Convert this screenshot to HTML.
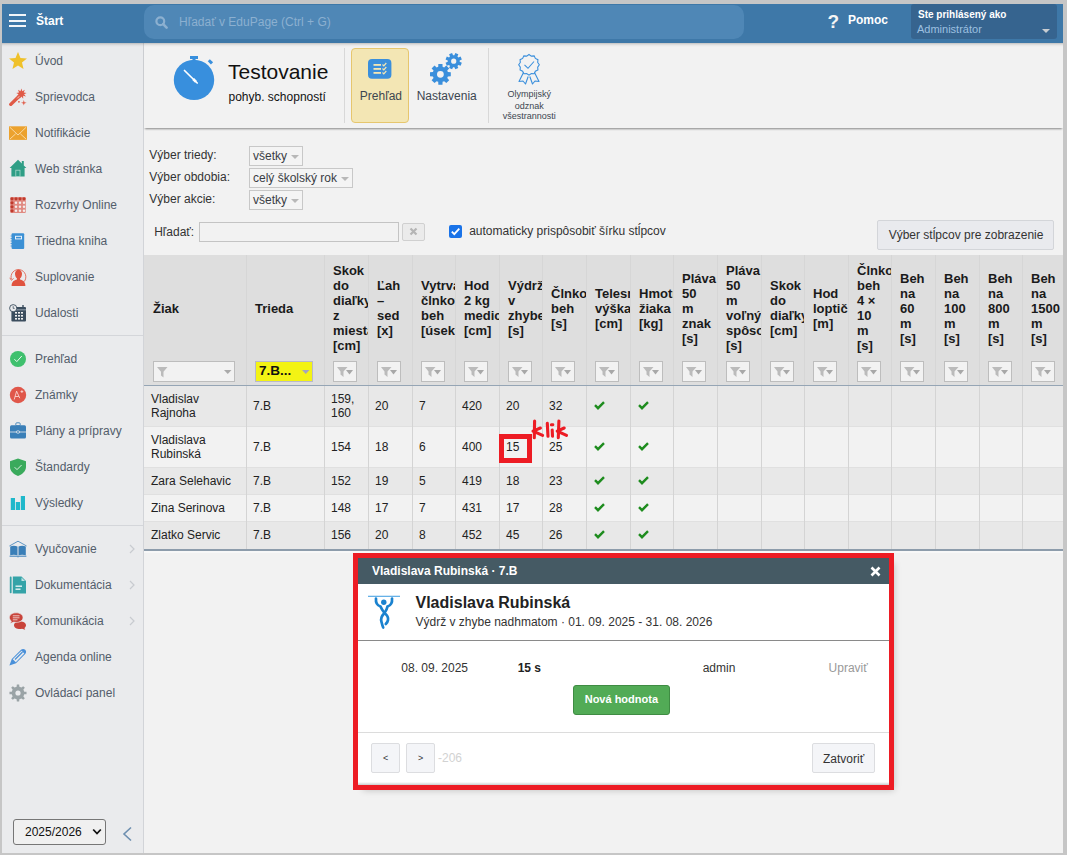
<!DOCTYPE html>
<html><head><meta charset="utf-8">
<style>
*{box-sizing:border-box;}
html,body{margin:0;padding:0;}
body{width:1067px;height:855px;overflow:hidden;position:relative;background:#f2f2f2;font-family:"Liberation Sans",sans-serif;color:#222;font-size:12px;}
.a{position:absolute;}
.t{position:absolute;white-space:nowrap;line-height:1;}
/* gray frame */
.frame{position:absolute;background:#c6c6c6;z-index:100;}
/* header */
#hdr{left:0;top:0;width:1067px;height:43px;background:#3e78a8;}
.hb{position:absolute;left:9px;width:17px;height:2px;background:#f2f5f8;}
#search{left:144px;top:5px;width:600px;height:34px;background:#4f87b6;border-radius:10px;}
#sidebg{left:0;top:43px;width:144px;height:812px;background:#eaebed;border-right:1px solid #d2d4d8;}
#side{left:0;top:0;width:0;height:0;}
.si{position:absolute;white-space:nowrap;left:35px;font-size:12px;color:#535d6b;line-height:1;}
.ic{position:absolute;left:9px;width:18px;height:18px;}
.sep{position:absolute;left:0;width:143px;height:1px;background:#d4d6da;}
.chev{position:absolute;left:130px;color:#c5c8cc;font-size:12px;}
.sel{position:absolute;height:20px;border:1px solid #c8c8c8;background:#f4f4f4;}
.sel span{position:absolute;left:3px;top:2.6px;font-size:12px;line-height:1;color:#3a3d44;white-space:nowrap;}
.sel i{position:absolute;right:3px;top:8px;width:0;height:0;border-left:4px solid transparent;border-right:4px solid transparent;border-top:4px solid #b8b8b8;}
.hl{position:absolute;overflow:hidden;height:120px;}
.hl div{position:absolute;left:9px;top:0;font-size:13px;line-height:15px;font-weight:bold;color:#1a1a1a;white-space:nowrap;}
.flt{position:absolute;top:361px;height:21px;border:1px solid #bdbdbd;background:#f2f2f2;}
.bt{position:absolute;font-size:12px;line-height:1;color:#222;white-space:nowrap;}
.btn{position:absolute;top:743px;height:30px;background:#f4f5f8;border:1px solid #dcdde0;border-radius:2px;}
.btn span{position:absolute;top:9px;font-size:11px;line-height:1;color:#333;white-space:nowrap;}
</style></head><body>

<!-- header -->
<div id="hdr" class="a">
  <div class="hb" style="top:14px"></div>
  <div class="hb" style="top:19.5px"></div>
  <div class="hb" style="top:25px"></div>
  <div class="t" style="left:36px;top:14.5px;font-size:12px;color:#fff;font-weight:bold;">Štart</div>
</div>
<div id="search" class="a">
  <svg class="a" style="left:11px;top:11px" width="13" height="13" viewBox="0 0 13 13"><circle cx="5.3" cy="5.3" r="3.9" fill="none" stroke="#8cb0d0" stroke-width="2.2"/><line x1="8.2" y1="8.2" x2="11.6" y2="11.6" stroke="#8cb0d0" stroke-width="2.6" stroke-linecap="round"/></svg>
  <div class="t" style="left:35px;top:11px;font-size:12px;color:#8cb0d0;">Hľadať v EduPage (Ctrl + G)</div>
</div>
<div class="t" style="left:827.5px;top:12px;font-size:19px;font-weight:bold;color:#f4f4f4;">?</div>
<div class="t" style="left:848px;top:14px;font-size:12px;font-weight:bold;color:#fff;">Pomoc</div>
<div class="a" style="left:911px;top:4px;width:146px;height:35px;background:#36648f;border-radius:3px;">
  <div class="t" style="left:7px;top:6px;font-size:10px;font-weight:bold;color:#fff;">Ste prihlásený ako</div>
  <div class="t" style="left:6px;top:20px;font-size:11px;color:#9dc0e0;">Administrátor</div>
  <svg class="a" style="left:130.5px;top:24.5px" width="8" height="4"><path d="M0 0H8L4 4Z" fill="#c8cdd2"/></svg>
</div>

<!-- sidebar -->
<div id="sidebg" class="a"></div>
<div id="side" class="a">
<div class="si" style="top:54.64px">Úvod</div>
<div class="si" style="top:90.64px">Sprievodca</div>
<div class="si" style="top:126.64px">Notifikácie</div>
<div class="si" style="top:162.64px">Web stránka</div>
<div class="si" style="top:198.64px">Rozvrhy Online</div>
<div class="si" style="top:234.64px">Triedna kniha</div>
<div class="si" style="top:270.64px">Suplovanie</div>
<div class="si" style="top:306.64px">Udalosti</div>
<div class="sep" style="top:335px"></div>
<div class="si" style="top:353px">Prehľad</div>
<div class="si" style="top:389px">Známky</div>
<div class="si" style="top:425px">Plány a prípravy</div>
<div class="si" style="top:461px">Štandardy</div>
<div class="si" style="top:497px">Výsledky</div>
<div class="sep" style="top:525px"></div>
<div class="si" style="top:543px">Vyučovanie</div>
<div class="si" style="top:579px">Dokumentácia</div>
<div class="si" style="top:615px">Komunikácia</div>
<div class="si" style="top:651px">Agenda online</div>
<div class="si" style="top:687px">Ovládací panel</div>
<svg class="a" style="left:128px;top:544px" width="8" height="10"><path d="M2 1L6 5L2 9" fill="none" stroke="#c8cbd0" stroke-width="1.2"/></svg>
<svg class="a" style="left:128px;top:580px" width="8" height="10"><path d="M2 1L6 5L2 9" fill="none" stroke="#c8cbd0" stroke-width="1.2"/></svg>
<svg class="a" style="left:128px;top:616px" width="8" height="10"><path d="M2 1L6 5L2 9" fill="none" stroke="#c8cbd0" stroke-width="1.2"/></svg>

<!-- icons -->
<svg class="ic" style="top:51.5px" viewBox="0 0 18 18"><polygon points="9.00,-0.10 11.47,5.90 17.94,6.40 12.99,10.60 14.53,16.90 9.00,13.50 3.47,16.90 5.01,10.60 0.06,6.40 6.53,5.90" fill="#efc12b"/></svg>
<svg class="ic" style="top:87.5px" viewBox="0 0 18 18" style="overflow:visible"><line x1="1.8" y1="16.4" x2="11.2" y2="7.2" stroke="#e05a47" stroke-width="3.4" stroke-linecap="round"/><line x1="8.2" y1="10.4" x2="11.4" y2="7.2" stroke="#f7d3cd" stroke-width="0.9"/><polygon points="12.40,0.50 13.32,3.26 15.81,1.74 14.74,4.45 17.62,4.88 15.06,6.27 16.99,8.45 14.14,7.87 14.21,10.78 12.40,8.50 10.59,10.78 10.66,7.87 7.81,8.45 9.74,6.27 7.18,4.88 10.06,4.45 8.99,1.74 11.48,3.26" fill="#e05a47"/><polygon points="14.80,12.00 15.44,14.16 17.60,14.80 15.44,15.44 14.80,17.60 14.16,15.44 12.00,14.80 14.16,14.16" fill="#e05a47"/><rect x="9" y="13.2" width="1.8" height="1.3" fill="#e05a47"/></svg>
<svg class="ic" style="top:123.8px" viewBox="0 0 18 18"><rect x="0" y="2.3" width="18" height="13.6" fill="#eca22e"/><path d="M0.8 3.2L9 11L17.2 3.2M0.8 15.2L6.7 9.8M17.2 15.2L11.3 9.8" fill="none" stroke="#fbe6c0" stroke-width="0.8"/></svg>
<svg class="ic" style="top:159.4px" viewBox="0 0 18 18"><path d="M0.6 9L9 0.8L12.8 4.5V2H14.8V6.4L17.4 9H15.6V17.6H2.4V9Z" fill="#2f9e86"/><rect x="6.8" y="11.2" width="4.2" height="6.4" fill="none" stroke="#a9d8cc" stroke-width="0.8"/></svg>
<svg class="ic" style="top:196px" viewBox="0 0 18 18"><rect x="1.2" y="1" width="15.6" height="16" rx="1" fill="#e08a82"/><g fill="#c0392b"><circle cx="3" cy="2.8" r="1.6"/><circle cx="7" cy="2.8" r="1.6"/><circle cx="11" cy="2.8" r="1.6"/><circle cx="15" cy="2.8" r="1.6"/><circle cx="3" cy="6.8" r="1.6"/><circle cx="3" cy="10.8" r="1.6"/><circle cx="3" cy="14.8" r="1.6"/></g><g fill="#f4eeed"><circle cx="7" cy="6.8" r="1.2"/><circle cx="11" cy="6.8" r="1.2"/><circle cx="15" cy="6.8" r="1.2"/><circle cx="7" cy="10.8" r="1.2"/><circle cx="11" cy="10.8" r="1.2"/><circle cx="15" cy="10.8" r="1.2"/><circle cx="7" cy="14.8" r="1.2"/><circle cx="11" cy="14.8" r="1.2"/><circle cx="15" cy="14.8" r="1.2"/></g></svg>
<svg class="ic" style="top:231.6px" viewBox="0 0 18 18"><rect x="2.6" y="1.3" width="12.6" height="15.6" rx="1" fill="#3b90d5"/><rect x="6" y="3.8" width="7" height="3.6" fill="#e8f1fa"/><rect x="7" y="4.8" width="5" height="1.6" fill="#3b90d5"/><g stroke="#3b90d5" stroke-width="0.8"><line x1="1.6" y1="4" x2="3" y2="4"/><line x1="1.6" y1="6.5" x2="3" y2="6.5"/><line x1="1.6" y1="9" x2="3" y2="9"/><line x1="1.6" y1="11.5" x2="3" y2="11.5"/><line x1="1.6" y1="14" x2="3" y2="14"/></g></svg>
<svg class="ic" style="top:268px" viewBox="0 0 18 18"><path d="M2.4 11.2A7.4 7.4 0 1 1 15.2 13.6" fill="none" stroke="#e0533f" stroke-width="0.8"/><path d="M0.8 9.8L2.4 12.3L4.6 10.4" fill="none" stroke="#e0533f" stroke-width="0.8"/><path d="M9.5 1.8C11.6 1.8 13 3.5 13 5.8C13 8 12 9.8 11 10.6V11.5C13.8 12.2 16.4 13.5 16.4 18H2.6C2.6 13.5 5.2 12.2 8 11.5V10.6C7 9.8 6 8 6 5.8C6 3.5 7.4 1.8 9.5 1.8Z" fill="#e0533f"/></svg>
<svg class="ic" style="top:303.5px" viewBox="0 0 18 18"><rect x="2.4" y="3" width="14.6" height="14.4" rx="1" fill="#3b4d5e"/><rect x="5.5" y="5.2" width="11.5" height="1.2" fill="#8795a2"/><g fill="#f0f0f0"><rect x="6" y="8" width="2" height="1.6"/><rect x="9" y="8" width="2" height="1.6"/><rect x="12" y="8" width="2" height="1.6"/><rect x="6" y="11" width="2" height="1.6"/><rect x="9" y="11" width="2" height="1.6"/><rect x="12" y="11" width="2" height="1.6"/><rect x="6" y="14" width="2" height="1.6"/><rect x="9" y="14" width="2" height="1.6"/><rect x="12" y="14" width="2" height="1.6"/></g><rect x="13.3" y="1" width="1.4" height="3.2" fill="#3b4d5e"/><circle cx="4.2" cy="4.2" r="3.6" fill="#eaebed" stroke="#3b4d5e" stroke-width="0.9"/><path d="M4.2 2.2V4.4H5.6" fill="none" stroke="#3b4d5e" stroke-width="0.8"/></svg>
<svg class="ic" style="top:350px" viewBox="0 0 18 18"><circle cx="9" cy="9" r="8" fill="#3fc06e"/><path d="M5.4 9.2L7.8 11.6L12.8 6" fill="none" stroke="#fff" stroke-width="0.9"/></svg>
<svg class="ic" style="top:385.8px" viewBox="0 0 18 18"><circle cx="9" cy="9" r="8.2" fill="#e0574a"/><path d="M5.2 13.5L7.6 5.2L10.8 12.2M6.1 10.5H9.8M11.5 5.6H14.3M12.9 4.2V7" fill="none" stroke="#fbe3df" stroke-width="0.8"/></svg>
<svg class="ic" style="top:421.8px" viewBox="0 0 18 18"><rect x="6.8" y="0.8" width="4.4" height="3" rx="1" fill="none" stroke="#3a7fb8" stroke-width="0.9"/><rect x="1" y="3.2" width="16" height="13.2" rx="1.5" fill="#3a7fb8"/><line x1="1" y1="10" x2="17" y2="10" stroke="#eaebed" stroke-width="0.8"/><ellipse cx="9" cy="10" rx="1.8" ry="1.2" fill="#3a7fb8" stroke="#eaebed" stroke-width="0.8"/></svg>
<svg class="ic" style="top:457.8px" viewBox="0 0 18 18"><path d="M9 0.6L17 3.2V9C17 13 13.5 16.2 9 18C4.5 16.2 1 13 1 9V3.2Z" fill="#3aaa5c"/><path d="M5.6 9.2L8 11.6L12.6 7" fill="none" stroke="#eaf5ee" stroke-width="0.9"/></svg>
<svg class="ic" style="top:494px" viewBox="0 0 18 18"><rect x="1.8" y="4" width="4.2" height="12" fill="#1fb8cb"/><rect x="6.8" y="8" width="4.2" height="8" fill="#1fb8cb"/><rect x="11.8" y="2" width="4.2" height="14" fill="#1fb8cb"/></svg>
<svg class="ic" style="top:539.7px" viewBox="0 0 18 18"><path d="M0.4 6L9 1.2L17.6 6" fill="none" stroke="#3a7fb8" stroke-width="0.8"/><path d="M1.2 6.4C3.5 5.6 6.5 5.6 8.5 6.6V15.3C6.5 14.5 3.5 14.5 1.2 15.2Z" fill="#3a7fb8"/><path d="M16.8 6.4C14.5 5.6 11.5 5.6 9.5 6.6V15.3C11.5 14.5 14.5 14.5 16.8 15.2Z" fill="#3a7fb8"/><path d="M0.6 16.2H17.4" stroke="#3a7fb8" stroke-width="1"/><path d="M8 16.8L9 17.6L10 16.8" fill="#3a7fb8"/></svg>
<svg class="ic" style="top:575.7px" viewBox="0 0 18 18"><rect x="0.8" y="0.6" width="1.8" height="16.6" rx="0.8" fill="#35a3a8"/><path d="M3.8 0.5H12.5L17 5V17.4H3.8Z" fill="#35a3a8"/><path d="M12.5 1.5V5H16" fill="#bfe3e4"/><rect x="6.5" y="9.5" width="6.5" height="1.4" fill="#e5f4f4"/><rect x="6.5" y="12.5" width="5" height="1.4" fill="#e5f4f4"/></svg>
<svg class="ic" style="top:611.7px" viewBox="0 0 18 18"><path d="M11 9.5C14.5 9.5 17 11 17 13.3C17 14.5 16.4 15.4 15.4 16L16.2 17.8L13 16.8C12.4 17 11.7 17 11 17C7.5 17 5 15.6 5 13.3C5 11 7.5 9.5 11 9.5Z" fill="#c8433a"/><path d="M7.2 0.8C11 0.8 14 2.8 14 5.6C14 8.4 11 10.4 7.2 10.4C6.3 10.4 5.5 10.3 4.8 10.1L1.2 11.6L2.3 9C1 8.1 0.4 6.9 0.4 5.6C0.4 2.8 3.4 0.8 7.2 0.8Z" fill="#c8433a" stroke="#eaebed" stroke-width="0.7"/><g stroke="#f2d4d1" stroke-width="0.9"><line x1="3.8" y1="3.8" x2="10.5" y2="3.8"/><line x1="3.8" y1="5.8" x2="10.5" y2="5.8"/><line x1="3.8" y1="7.8" x2="8.5" y2="7.8"/></g></svg>
<svg class="ic" style="top:647.8px" viewBox="0 0 18 18"><path d="M0.4 17.6L2.8 11L12 1.8C13.2 0.6 15 0.6 16.2 1.8C17.4 3 17.4 4.8 16.2 6L7 15.2Z" fill="#4a90d9"/><path d="M3.8 11.2L12.5 2.7L15.3 5.5L6.8 14.2Z" fill="#eaebed"/><line x1="6" y1="11.5" x2="13.5" y2="4" stroke="#4a90d9" stroke-width="1.3"/></svg>
<svg class="ic" style="top:683.9px" viewBox="0 0 18 18"><path d="M15.25,7.63 L17.52,7.82 L17.52,10.18 L15.25,10.37 L14.39,12.45 L15.86,14.19 L14.19,15.86 L12.45,14.39 L10.37,15.25 L10.18,17.52 L7.82,17.52 L7.63,15.25 L5.55,14.39 L3.81,15.86 L2.14,14.19 L3.61,12.45 L2.75,10.37 L0.48,10.18 L0.48,7.82 L2.75,7.63 L3.61,5.55 L2.14,3.81 L3.81,2.14 L5.55,3.61 L7.63,2.75 L7.82,0.48 L10.18,0.48 L10.37,2.75 L12.45,3.61 L14.19,2.14 L15.86,3.81 L14.39,5.55Z" fill="#9aa3a6"/><circle cx="9" cy="9" r="2.6" fill="#eaebed"/></svg>

<!-- year select -->
<div class="a" style="left:13px;top:819px;width:93px;height:26px;border:1px solid #767676;border-radius:3px;background:#f0f0f0;"></div>
<div class="t" style="left:25px;top:825.8px;font-size:12px;color:#111;">2025/2026</div>
<svg class="a" style="left:92px;top:828px" width="10" height="8"><path d="M1.2 1.5L5 5.5L8.8 1.5" fill="none" stroke="#111" stroke-width="1.8"/></svg>
<svg class="a" style="left:121px;top:826px" width="12" height="16"><path d="M10 1.5L3 8L10 14.5" fill="none" stroke="#6d8fb0" stroke-width="1.6"/></svg>
</div>


<!-- page header -->
<div class="a" style="left:144px;top:43px;width:919px;height:85px;background:#f2f2f2;box-shadow:0 2px 2px -1px rgba(0,0,0,0.45);"></div>
<svg class="a" style="left:170px;top:52px" width="48" height="52" viewBox="0 0 48 52">
  <circle cx="24" cy="27.9" r="20.2" fill="#388fdd"/>
  <rect x="20" y="4" width="8" height="3" fill="#388fdd"/>
  <rect x="22.5" y="6" width="3" height="3" fill="#388fdd"/>
  <line x1="38.8" y1="8.2" x2="42" y2="11.4" stroke="#388fdd" stroke-width="3"/>
  <line x1="14.5" y1="18.5" x2="27.2" y2="31" stroke="#fff" stroke-width="1.7" stroke-linecap="round"/>
  <line x1="23.2" y1="27" x2="26" y2="29.8" stroke="#fff" stroke-width="2.6"/>
</svg>
<div class="t" style="left:228px;top:61px;font-size:21px;color:#111;">Testovanie</div>
<div class="t" style="left:228.5px;top:91px;font-size:12px;color:#111;">pohyb. schopností</div>
<div class="a" style="left:344px;top:48px;width:1px;height:75px;background:#d8d8d8;"></div>
<div class="a" style="left:351px;top:48px;width:58px;height:75px;background:#f3e6b4;border:1px solid #e6c66e;border-radius:4px;"></div>
<svg class="a" style="left:368px;top:59px" width="24" height="20" viewBox="0 0 24 20">
  <rect x="0" y="0" width="23.4" height="19.8" rx="4" fill="#3a8fdc"/>
  <g fill="#f3e6b4"><rect x="5.5" y="5" width="7.5" height="1.8"/><rect x="5.5" y="9" width="7.5" height="1.8"/><rect x="5.5" y="13" width="7.5" height="1.8"/></g>
  <path d="M14.5 5.5L15.8 6.8L18.3 4M14.5 9.5L15.8 10.8L18.3 8M14.5 13.5L15.8 14.8L18.3 12" fill="none" stroke="#f3e6b4" stroke-width="1.2"/>
</svg>
<div class="t" style="left:359.8px;top:90.2px;font-size:12px;color:#3c4650;">Prehľad</div>
<svg class="a" style="left:426px;top:52px" width="40" height="36" viewBox="0 0 40 36"><path fill-rule="evenodd" fill="#3a8fdc" d="M21.89 20.12 L24.80 20.23 L24.80 24.37 L21.89 24.48 L21.24 26.06 L23.21 28.19 L20.29 31.11 L18.16 29.14 L16.58 29.79 L16.47 32.70 L12.33 32.70 L12.22 29.79 L10.64 29.14 L8.51 31.11 L5.59 28.19 L7.56 26.06 L6.91 24.48 L4.00 24.37 L4.00 20.23 L6.91 20.12 L7.56 18.54 L5.59 16.41 L8.51 13.49 L10.64 15.46 L12.22 14.81 L12.33 11.90 L16.47 11.90 L16.58 14.81 L18.16 15.46 L20.29 13.49 L23.21 16.41 L21.24 18.54Z M14.399999999999977 18.9A3.4 3.4 0 1 0 14.399999999999977 25.699999999999996A3.4 3.4 0 1 0 14.399999999999977 18.9Z"/><path fill-rule="evenodd" fill="#3a8fdc" d="M33.66 9.86 L35.84 10.82 L34.60 13.81 L32.38 12.95 L31.45 13.88 L32.31 16.10 L29.32 17.34 L28.36 15.16 L27.04 15.16 L26.08 17.34 L23.09 16.10 L23.95 13.88 L23.02 12.95 L20.80 13.81 L19.56 10.82 L21.74 9.86 L21.74 8.54 L19.56 7.58 L20.80 4.59 L23.02 5.45 L23.95 4.52 L23.09 2.30 L26.08 1.06 L27.04 3.24 L28.36 3.24 L29.32 1.06 L32.31 2.30 L31.45 4.52 L32.38 5.45 L34.60 4.59 L35.84 7.58 L33.66 8.54Z M27.69999999999999 6.600000000000003A2.6 2.6 0 1 0 27.69999999999999 11.800000000000002A2.6 2.6 0 1 0 27.69999999999999 6.600000000000003Z"/></svg>
<div class="t" style="left:416.7px;top:90.2px;font-size:12px;color:#3c4650;">Nastavenia</div>
<div class="a" style="left:488px;top:48px;width:1px;height:75px;background:#d8d8d8;"></div>
<svg class="a" style="left:516px;top:52px" width="26" height="34" viewBox="0 0 26 34">
  <path d="M13.00 2.50 L15.33 4.11 L18.15 3.88 L19.36 6.44 L21.92 7.65 L21.69 10.47 L23.30 12.80 L21.69 15.13 L21.92 17.95 L19.36 19.16 L18.15 21.72 L15.33 21.49 L13.00 23.10 L10.67 21.49 L7.85 21.72 L6.64 19.16 L4.08 17.95 L4.31 15.13 L2.70 12.80 L4.31 10.47 L4.08 7.65 L6.64 6.44 L7.85 3.88 L10.67 4.11 L13.00 2.50Z" fill="none" stroke="#3a8fdc" stroke-width="1.1"/>
  <path d="M8.5 12.8L12 16.3L18 9.5" fill="none" stroke="#3a8fdc" stroke-width="1.1"/>
  <path d="M7.5 20.5L3 29.5L7 29L9.5 32L12.2 24.5M18.5 20.5L23 29.5L19 29L16.5 32L13.8 24.5" fill="none" stroke="#3a8fdc" stroke-width="1.1" stroke-linejoin="round"/>
</svg>
<div class="t" style="left:507.6px;top:89.7px;font-size:9px;color:#3c4650;">Olympijský</div>
<div class="t" style="left:514.7px;top:101.5px;font-size:9px;color:#3c4650;">odznak</div>
<div class="t" style="left:502.8px;top:112.2px;font-size:9px;color:#3c4650;">všestrannosti</div>

<!-- filters -->
<div class="t" style="left:149.3px;top:148.7px;font-size:12px;color:#333;">Výber triedy:</div>
<div class="t" style="left:149.3px;top:171px;font-size:12px;color:#333;">Výber obdobia:</div>
<div class="t" style="left:149.3px;top:193px;font-size:12px;color:#333;">Výber akcie:</div>
<div class="sel" style="left:249px;top:146px;width:54px;"><span>všetky</span><i></i></div>
<div class="sel" style="left:249px;top:168px;width:104px;"><span>celý školský rok</span><i></i></div>
<div class="sel" style="left:249px;top:190px;width:54px;"><span>všetky</span><i></i></div>

<div class="t" style="left:154.2px;top:225.6px;font-size:12px;color:#333;">Hľadať:</div>
<div class="a" style="left:199px;top:222px;width:200px;height:20px;border:1px solid #c4c4c4;background:#f2f2f2;"></div>
<div class="a" style="left:402px;top:223px;width:23px;height:18px;border:1px solid #d0d0d0;background:#ebebeb;border-radius:2px;"></div>
<svg class="a" style="left:409px;top:227px" width="9" height="9"><path d="M1.5 1.5L7.5 7.5M7.5 1.5L1.5 7.5" stroke="#b5b5b5" stroke-width="2.2"/></svg>
<div class="a" style="left:449px;top:225px;width:13px;height:13px;background:#1a73e8;border-radius:2px;"></div>
<svg class="a" style="left:449px;top:225px" width="13" height="13"><path d="M2.8 6.6L5.3 9.2L10.3 3.6" fill="none" stroke="#fff" stroke-width="1.8"/></svg>
<div class="t" style="left:469.2px;top:225px;font-size:12px;color:#333;">automaticky prispôsobiť šírku stĺpcov</div>
<div class="a" style="left:877px;top:220px;width:177px;height:30px;background:#e9eaee;border:1px solid #d3d5d9;border-radius:2px;"></div>
<div class="t" style="left:888.7px;top:229px;font-size:12px;color:#333;">Výber stĺpcov pre zobrazenie</div>

<!-- table -->
<div id="tbl">
<div class="a" style="left:144px;top:255px;width:919px;height:130px;background:#dedede;"></div>
<div class="a" style="left:144px;top:386px;width:919px;height:41px;background:#e8e8e8;"></div>
<div class="a" style="left:144px;top:427px;width:919px;height:41px;background:#f2f2f2;"></div>
<div class="a" style="left:144px;top:426px;width:919px;height:1px;background:#e0e0e0;"></div>
<div class="a" style="left:144px;top:468px;width:919px;height:27px;background:#e8e8e8;"></div>
<div class="a" style="left:144px;top:467px;width:919px;height:1px;background:#e0e0e0;"></div>
<div class="a" style="left:144px;top:495px;width:919px;height:27px;background:#f2f2f2;"></div>
<div class="a" style="left:144px;top:494px;width:919px;height:1px;background:#e0e0e0;"></div>
<div class="a" style="left:144px;top:522px;width:919px;height:27px;background:#e8e8e8;"></div>
<div class="a" style="left:144px;top:521px;width:919px;height:1px;background:#e0e0e0;"></div>
<div class="a" style="left:144px;top:385px;width:919px;height:1px;background:#95a5b5;"></div>
<div class="a" style="left:144px;top:549px;width:919px;height:2px;background:#8d9cab;"></div>
<div class="a" style="left:144px;top:551px;width:919px;height:2px;background:#f8f8f8;"></div>
<div class="a" style="left:246px;top:255px;width:1px;height:130px;background:#d6d6d6;"></div>
<div class="a" style="left:246px;top:386px;width:1px;height:163px;background:#d4d4d4;"></div>
<div class="a" style="left:324px;top:255px;width:1px;height:130px;background:#d6d6d6;"></div>
<div class="a" style="left:324px;top:386px;width:1px;height:163px;background:#d4d4d4;"></div>
<div class="a" style="left:368px;top:255px;width:1px;height:130px;background:#d6d6d6;"></div>
<div class="a" style="left:368px;top:386px;width:1px;height:163px;background:#d4d4d4;"></div>
<div class="a" style="left:412px;top:255px;width:1px;height:130px;background:#d6d6d6;"></div>
<div class="a" style="left:412px;top:386px;width:1px;height:163px;background:#d4d4d4;"></div>
<div class="a" style="left:455px;top:255px;width:1px;height:130px;background:#d6d6d6;"></div>
<div class="a" style="left:455px;top:386px;width:1px;height:163px;background:#d4d4d4;"></div>
<div class="a" style="left:499px;top:255px;width:1px;height:130px;background:#d6d6d6;"></div>
<div class="a" style="left:499px;top:386px;width:1px;height:163px;background:#d4d4d4;"></div>
<div class="a" style="left:542px;top:255px;width:1px;height:130px;background:#d6d6d6;"></div>
<div class="a" style="left:542px;top:386px;width:1px;height:163px;background:#d4d4d4;"></div>
<div class="a" style="left:586px;top:255px;width:1px;height:130px;background:#d6d6d6;"></div>
<div class="a" style="left:586px;top:386px;width:1px;height:163px;background:#d4d4d4;"></div>
<div class="a" style="left:630px;top:255px;width:1px;height:130px;background:#d6d6d6;"></div>
<div class="a" style="left:630px;top:386px;width:1px;height:163px;background:#d4d4d4;"></div>
<div class="a" style="left:673px;top:255px;width:1px;height:130px;background:#d6d6d6;"></div>
<div class="a" style="left:673px;top:386px;width:1px;height:163px;background:#d4d4d4;"></div>
<div class="a" style="left:717px;top:255px;width:1px;height:130px;background:#d6d6d6;"></div>
<div class="a" style="left:717px;top:386px;width:1px;height:163px;background:#d4d4d4;"></div>
<div class="a" style="left:761px;top:255px;width:1px;height:130px;background:#d6d6d6;"></div>
<div class="a" style="left:761px;top:386px;width:1px;height:163px;background:#d4d4d4;"></div>
<div class="a" style="left:804px;top:255px;width:1px;height:130px;background:#d6d6d6;"></div>
<div class="a" style="left:804px;top:386px;width:1px;height:163px;background:#d4d4d4;"></div>
<div class="a" style="left:848px;top:255px;width:1px;height:130px;background:#d6d6d6;"></div>
<div class="a" style="left:848px;top:386px;width:1px;height:163px;background:#d4d4d4;"></div>
<div class="a" style="left:891px;top:255px;width:1px;height:130px;background:#d6d6d6;"></div>
<div class="a" style="left:891px;top:386px;width:1px;height:163px;background:#d4d4d4;"></div>
<div class="a" style="left:935px;top:255px;width:1px;height:130px;background:#d6d6d6;"></div>
<div class="a" style="left:935px;top:386px;width:1px;height:163px;background:#d4d4d4;"></div>
<div class="a" style="left:979px;top:255px;width:1px;height:130px;background:#d6d6d6;"></div>
<div class="a" style="left:979px;top:386px;width:1px;height:163px;background:#d4d4d4;"></div>
<div class="a" style="left:1022px;top:255px;width:1px;height:130px;background:#d6d6d6;"></div>
<div class="a" style="left:1022px;top:386px;width:1px;height:163px;background:#d4d4d4;"></div>
<div class="hl" style="left:144px;top:300.60px;width:102px;"><div>Žiak</div></div>
<div class="hl" style="left:246px;top:300.60px;width:78px;"><div>Trieda</div></div>
<div class="hl" style="left:324px;top:263.10px;width:44px;"><div>Skok<br>do<br>diaľky<br>z<br>miesta<br>[cm]</div></div>
<div class="hl" style="left:368px;top:278.10px;width:44px;"><div>Ľah<br>–<br>sed<br>[x]</div></div>
<div class="hl" style="left:412px;top:278.10px;width:43px;"><div>Vytrvalostný<br>člnkový<br>beh<br>[úseky]</div></div>
<div class="hl" style="left:455px;top:278.10px;width:44px;"><div>Hod<br>2 kg<br>medicinbal<br>[cm]</div></div>
<div class="hl" style="left:499px;top:278.10px;width:43px;"><div>Výdrž<br>v<br>zhybe<br>[s]</div></div>
<div class="hl" style="left:542px;top:285.60px;width:44px;"><div>Člnkový<br>beh<br>[s]</div></div>
<div class="hl" style="left:586px;top:285.60px;width:44px;"><div>Telesná<br>výška<br>[cm]</div></div>
<div class="hl" style="left:630px;top:285.60px;width:43px;"><div>Hmotnosť<br>žiaka<br>[kg]</div></div>
<div class="hl" style="left:673px;top:270.60px;width:44px;"><div>Pláva<br>50<br>m<br>znak<br>[s]</div></div>
<div class="hl" style="left:717px;top:263.10px;width:44px;"><div>Pláva<br>50<br>m<br>voľný<br>spôsob<br>[s]</div></div>
<div class="hl" style="left:761px;top:278.10px;width:43px;"><div>Skok<br>do<br>diaľky<br>[cm]</div></div>
<div class="hl" style="left:804px;top:285.60px;width:44px;"><div>Hod<br>loptičkou<br>[m]</div></div>
<div class="hl" style="left:848px;top:263.10px;width:43px;"><div>Člnkový<br>beh<br>4 ×<br>10<br>m<br>[s]</div></div>
<div class="hl" style="left:891px;top:270.60px;width:44px;"><div>Beh<br>na<br>60<br>m<br>[s]</div></div>
<div class="hl" style="left:935px;top:270.60px;width:44px;"><div>Beh<br>na<br>100<br>m<br>[s]</div></div>
<div class="hl" style="left:979px;top:270.60px;width:43px;"><div>Beh<br>na<br>800<br>m<br>[s]</div></div>
<div class="hl" style="left:1022px;top:270.60px;width:44px;"><div>Beh<br>na<br>1500<br>m<br>[s]</div></div>
<div class="flt" style="left:153px;width:82px;"><svg class="a" style="left:3px;top:5px" width="11" height="11"><path d="M0 0H10.5L6.5 4.7V10.5L4 8.5V4.7Z" fill="#bbb"/></svg><svg class="a" style="left:70px;top:8px" width="8" height="5"><path d="M0 0H7.5L3.75 4Z" fill="#aaa"/></svg></div>
<div class="flt" style="left:255px;width:58px;background:#f3f314;border-color:#b9b9c9;"><span style="position:absolute;left:3px;top:2px;font-size:13.5px;line-height:1;font-weight:bold;color:#111;">7.B...</span><svg class="a" style="left:46px;top:8px" width="8" height="5"><path d="M0 0H7.5L3.75 4Z" fill="#a5a5bd"/></svg></div>
<div class="flt" style="left:333px;width:24px;"><svg class="a" style="left:3px;top:5px" width="18" height="11"><path d="M0 0H10.5L6.5 4.5V10L3.5 7.5V4.5Z" fill="#bbb"/><path d="M9 3H16L12.5 7.5Z" fill="#a8a8a8"/></svg></div>
<div class="flt" style="left:377px;width:24px;"><svg class="a" style="left:3px;top:5px" width="18" height="11"><path d="M0 0H10.5L6.5 4.5V10L3.5 7.5V4.5Z" fill="#bbb"/><path d="M9 3H16L12.5 7.5Z" fill="#a8a8a8"/></svg></div>
<div class="flt" style="left:421px;width:24px;"><svg class="a" style="left:3px;top:5px" width="18" height="11"><path d="M0 0H10.5L6.5 4.5V10L3.5 7.5V4.5Z" fill="#bbb"/><path d="M9 3H16L12.5 7.5Z" fill="#a8a8a8"/></svg></div>
<div class="flt" style="left:464px;width:24px;"><svg class="a" style="left:3px;top:5px" width="18" height="11"><path d="M0 0H10.5L6.5 4.5V10L3.5 7.5V4.5Z" fill="#bbb"/><path d="M9 3H16L12.5 7.5Z" fill="#a8a8a8"/></svg></div>
<div class="flt" style="left:508px;width:24px;"><svg class="a" style="left:3px;top:5px" width="18" height="11"><path d="M0 0H10.5L6.5 4.5V10L3.5 7.5V4.5Z" fill="#bbb"/><path d="M9 3H16L12.5 7.5Z" fill="#a8a8a8"/></svg></div>
<div class="flt" style="left:551px;width:24px;"><svg class="a" style="left:3px;top:5px" width="18" height="11"><path d="M0 0H10.5L6.5 4.5V10L3.5 7.5V4.5Z" fill="#bbb"/><path d="M9 3H16L12.5 7.5Z" fill="#a8a8a8"/></svg></div>
<div class="flt" style="left:595px;width:24px;"><svg class="a" style="left:3px;top:5px" width="18" height="11"><path d="M0 0H10.5L6.5 4.5V10L3.5 7.5V4.5Z" fill="#bbb"/><path d="M9 3H16L12.5 7.5Z" fill="#a8a8a8"/></svg></div>
<div class="flt" style="left:639px;width:24px;"><svg class="a" style="left:3px;top:5px" width="18" height="11"><path d="M0 0H10.5L6.5 4.5V10L3.5 7.5V4.5Z" fill="#bbb"/><path d="M9 3H16L12.5 7.5Z" fill="#a8a8a8"/></svg></div>
<div class="flt" style="left:682px;width:24px;"><svg class="a" style="left:3px;top:5px" width="18" height="11"><path d="M0 0H10.5L6.5 4.5V10L3.5 7.5V4.5Z" fill="#bbb"/><path d="M9 3H16L12.5 7.5Z" fill="#a8a8a8"/></svg></div>
<div class="flt" style="left:726px;width:24px;"><svg class="a" style="left:3px;top:5px" width="18" height="11"><path d="M0 0H10.5L6.5 4.5V10L3.5 7.5V4.5Z" fill="#bbb"/><path d="M9 3H16L12.5 7.5Z" fill="#a8a8a8"/></svg></div>
<div class="flt" style="left:770px;width:24px;"><svg class="a" style="left:3px;top:5px" width="18" height="11"><path d="M0 0H10.5L6.5 4.5V10L3.5 7.5V4.5Z" fill="#bbb"/><path d="M9 3H16L12.5 7.5Z" fill="#a8a8a8"/></svg></div>
<div class="flt" style="left:813px;width:24px;"><svg class="a" style="left:3px;top:5px" width="18" height="11"><path d="M0 0H10.5L6.5 4.5V10L3.5 7.5V4.5Z" fill="#bbb"/><path d="M9 3H16L12.5 7.5Z" fill="#a8a8a8"/></svg></div>
<div class="flt" style="left:857px;width:24px;"><svg class="a" style="left:3px;top:5px" width="18" height="11"><path d="M0 0H10.5L6.5 4.5V10L3.5 7.5V4.5Z" fill="#bbb"/><path d="M9 3H16L12.5 7.5Z" fill="#a8a8a8"/></svg></div>
<div class="flt" style="left:900px;width:24px;"><svg class="a" style="left:3px;top:5px" width="18" height="11"><path d="M0 0H10.5L6.5 4.5V10L3.5 7.5V4.5Z" fill="#bbb"/><path d="M9 3H16L12.5 7.5Z" fill="#a8a8a8"/></svg></div>
<div class="flt" style="left:944px;width:24px;"><svg class="a" style="left:3px;top:5px" width="18" height="11"><path d="M0 0H10.5L6.5 4.5V10L3.5 7.5V4.5Z" fill="#bbb"/><path d="M9 3H16L12.5 7.5Z" fill="#a8a8a8"/></svg></div>
<div class="flt" style="left:988px;width:24px;"><svg class="a" style="left:3px;top:5px" width="18" height="11"><path d="M0 0H10.5L6.5 4.5V10L3.5 7.5V4.5Z" fill="#bbb"/><path d="M9 3H16L12.5 7.5Z" fill="#a8a8a8"/></svg></div>
<div class="flt" style="left:1031px;width:24px;"><svg class="a" style="left:3px;top:5px" width="18" height="11"><path d="M0 0H10.5L6.5 4.5V10L3.5 7.5V4.5Z" fill="#bbb"/><path d="M9 3H16L12.5 7.5Z" fill="#a8a8a8"/></svg></div>
<div class="bt" style="left:151px;top:392.74px;">Vladislav</div>
<div class="bt" style="left:151px;top:406.54px;">Rajnoha</div>
<div class="bt" style="left:253px;top:399.64px;">7.B</div>
<div class="bt" style="left:331px;top:392.74px;">159,</div>
<div class="bt" style="left:331px;top:406.54px;">160</div>
<div class="bt" style="left:375px;top:399.64px;">20</div>
<div class="bt" style="left:419px;top:399.64px;">7</div>
<div class="bt" style="left:462px;top:399.64px;">420</div>
<div class="bt" style="left:506px;top:399.64px;">20</div>
<div class="bt" style="left:549px;top:399.64px;">32</div>
<svg class="a" style="left:593.5px;top:401.1px" width="11" height="9"><path d="M1 4.2L4 7.2L10 1.2" fill="none" stroke="#1e8c1e" stroke-width="2.4"/></svg>
<svg class="a" style="left:637.5px;top:401.1px" width="11" height="9"><path d="M1 4.2L4 7.2L10 1.2" fill="none" stroke="#1e8c1e" stroke-width="2.4"/></svg>
<div class="bt" style="left:151px;top:433.74px;">Vladislava</div>
<div class="bt" style="left:151px;top:447.54px;">Rubinská</div>
<div class="bt" style="left:253px;top:440.64px;">7.B</div>
<div class="bt" style="left:331px;top:440.64px;">154</div>
<div class="bt" style="left:375px;top:440.64px;">18</div>
<div class="bt" style="left:419px;top:440.64px;">6</div>
<div class="bt" style="left:462px;top:440.64px;">400</div>
<div class="bt" style="left:506px;top:440.64px;">15</div>
<div class="bt" style="left:549px;top:440.64px;">25</div>
<svg class="a" style="left:593.5px;top:442.1px" width="11" height="9"><path d="M1 4.2L4 7.2L10 1.2" fill="none" stroke="#1e8c1e" stroke-width="2.4"/></svg>
<svg class="a" style="left:637.5px;top:442.1px" width="11" height="9"><path d="M1 4.2L4 7.2L10 1.2" fill="none" stroke="#1e8c1e" stroke-width="2.4"/></svg>
<div class="bt" style="left:151px;top:474.84px;">Zara Selehavic</div>
<div class="bt" style="left:253px;top:474.84px;">7.B</div>
<div class="bt" style="left:331px;top:474.84px;">152</div>
<div class="bt" style="left:375px;top:474.84px;">19</div>
<div class="bt" style="left:419px;top:474.84px;">5</div>
<div class="bt" style="left:462px;top:474.84px;">419</div>
<div class="bt" style="left:506px;top:474.84px;">18</div>
<div class="bt" style="left:549px;top:474.84px;">23</div>
<svg class="a" style="left:593.5px;top:476.3px" width="11" height="9"><path d="M1 4.2L4 7.2L10 1.2" fill="none" stroke="#1e8c1e" stroke-width="2.4"/></svg>
<svg class="a" style="left:637.5px;top:476.3px" width="11" height="9"><path d="M1 4.2L4 7.2L10 1.2" fill="none" stroke="#1e8c1e" stroke-width="2.4"/></svg>
<div class="bt" style="left:151px;top:501.84px;">Zina Serinova</div>
<div class="bt" style="left:253px;top:501.84px;">7.B</div>
<div class="bt" style="left:331px;top:501.84px;">148</div>
<div class="bt" style="left:375px;top:501.84px;">17</div>
<div class="bt" style="left:419px;top:501.84px;">7</div>
<div class="bt" style="left:462px;top:501.84px;">431</div>
<div class="bt" style="left:506px;top:501.84px;">17</div>
<div class="bt" style="left:549px;top:501.84px;">28</div>
<svg class="a" style="left:593.5px;top:503.3px" width="11" height="9"><path d="M1 4.2L4 7.2L10 1.2" fill="none" stroke="#1e8c1e" stroke-width="2.4"/></svg>
<svg class="a" style="left:637.5px;top:503.3px" width="11" height="9"><path d="M1 4.2L4 7.2L10 1.2" fill="none" stroke="#1e8c1e" stroke-width="2.4"/></svg>
<div class="bt" style="left:151px;top:528.84px;">Zlatko Servic</div>
<div class="bt" style="left:253px;top:528.84px;">7.B</div>
<div class="bt" style="left:331px;top:528.84px;">156</div>
<div class="bt" style="left:375px;top:528.84px;">20</div>
<div class="bt" style="left:419px;top:528.84px;">8</div>
<div class="bt" style="left:462px;top:528.84px;">452</div>
<div class="bt" style="left:506px;top:528.84px;">45</div>
<div class="bt" style="left:549px;top:528.84px;">26</div>
<svg class="a" style="left:593.5px;top:530.3px" width="11" height="9"><path d="M1 4.2L4 7.2L10 1.2" fill="none" stroke="#1e8c1e" stroke-width="2.4"/></svg>
<svg class="a" style="left:637.5px;top:530.3px" width="11" height="9"><path d="M1 4.2L4 7.2L10 1.2" fill="none" stroke="#1e8c1e" stroke-width="2.4"/></svg>
</div>
<!-- /table -->

<!-- modal -->
<div class="a" style="left:358px;top:558px;width:531px;height:227px;background:linear-gradient(#fff 0,#fff 224px,#c9cdcd 227px);box-shadow:5px 5px 7px rgba(0,0,0,0.22);"></div>
<div class="a" style="left:358px;top:558px;width:531px;height:25.5px;background:#455a64;"></div>
<div class="t" style="left:372px;top:564.6px;font-size:12px;font-weight:bold;color:#fff;">Vladislava Rubinská · 7.B</div>
<svg class="a" style="left:870px;top:566px" width="11" height="11"><path d="M1.5 1.5L9.5 9.5M9.5 1.5L1.5 9.5" stroke="#fff" stroke-width="2.6"/></svg>
<svg class="a" style="left:362px;top:588px" width="46" height="46" viewBox="0 0 46 46">
  <line x1="6" y1="8.3" x2="38" y2="8.3" stroke="#4ba3e3" stroke-width="1.1"/>
  <circle cx="21.8" cy="14.3" r="2.7" fill="#1a82cf"/>
  <path d="M14 10.5C13.5 15 15.5 17.5 18.5 18.5C19.5 21 21 23 22.5 25C20 27.5 18.5 31 19.5 34C20 36 20.5 38 21.2 39.5" fill="none" stroke="#1a82cf" stroke-width="2.7" stroke-linecap="round"/>
  <path d="M30 10.5C30.5 15 28.5 17.5 25.5 18.5C25 21 24 23 22.5 25C25 27 26.5 29.5 26 32C25.8 33.5 24.8 35 23.8 36" fill="none" stroke="#1a82cf" stroke-width="2.7" stroke-linecap="round"/>
</svg>
<div class="t" style="left:415.5px;top:594.6px;font-size:16px;font-weight:bold;color:#222;">Vladislava Rubinská</div>
<div class="t" style="left:415.5px;top:616.1px;font-size:12px;color:#333;">Výdrž v zhybe nadhmatom · 01. 09. 2025 - 31. 08. 2026</div>
<div class="a" style="left:358px;top:640px;width:531px;height:1px;background:#8a8a8a;"></div>
<div class="t" style="left:401.3px;top:662px;font-size:12px;color:#333;">08. 09. 2025</div>
<div class="t" style="left:517.7px;top:662px;font-size:12px;font-weight:bold;color:#222;">15 s</div>
<div class="t" style="left:702.7px;top:661.6px;font-size:12px;color:#333;">admin</div>
<div class="t" style="left:828.6px;top:661.6px;font-size:12px;color:#999;">Upraviť</div>
<div class="a" style="left:573px;top:685px;width:97px;height:30px;background:#52ab56;border:1px solid #3f8c43;border-radius:3px;"></div>
<div class="t" style="left:584.7px;top:694.2px;font-size:11px;font-weight:bold;color:#fff;">Nová hodnota</div>
<div class="a" style="left:358px;top:732px;width:531px;height:1px;background:#dcdcdc;"></div>
<div class="btn" style="left:371px;width:29px;"><span style="left:11px;top:10px;font-size:9px;">&lt;</span></div>
<div class="btn" style="left:406px;width:29px;"><span style="left:11px;top:10px;font-size:9px;">&gt;</span></div>
<div class="t" style="left:438px;top:752px;font-size:12px;color:#d2d2d2;">-206</div>
<div class="btn" style="left:812px;width:63px;"><span style="left:10px;top:8.5px;font-size:12px;">Zatvoriť</span></div>

<!-- red annotation -->
<div class="a" style="left:353px;top:553px;width:541px;height:237px;border:5px solid #ed1c24;z-index:20;"></div>
<div class="a" style="left:499px;top:434px;width:33px;height:29px;border:5px solid #ed1c24;"></div>
<svg class="a" style="left:528px;top:415px" width="45" height="28" viewBox="0 0 45 28">
  <g fill="none" stroke="#ed1c24" stroke-width="3.1" stroke-linecap="round" stroke-linejoin="round">
    <path d="M6.6 6L6.3 22.7"/>
    <path d="M12.4 13L5 16.1L14.6 20.4"/>
    <path d="M19.3 8.3L20 21.3"/>
    <path d="M23.4 9.8L24.8 9.7"/>
    <path d="M24.2 15L24.5 21.3"/>
    <path d="M30.9 6L30.3 22.7"/>
    <path d="M36.2 13L29.2 16.1L38.5 20.4"/>
  </g>
</svg>

<div class="a" style="left:0;top:43px;width:1067px;height:4px;background:linear-gradient(rgba(0,0,0,0.2),rgba(0,0,0,0.05) 50%,rgba(0,0,0,0));z-index:50;"></div>
<!-- frame -->
<div class="frame" style="left:0;top:0;width:1067px;height:4px"></div>
<div class="frame" style="left:0;top:0;width:2px;height:855px"></div>
<div class="frame" style="left:1063px;top:0;width:4px;height:855px"></div>
<div class="frame" style="left:0;top:853px;width:1067px;height:2px"></div>
</body></html>
